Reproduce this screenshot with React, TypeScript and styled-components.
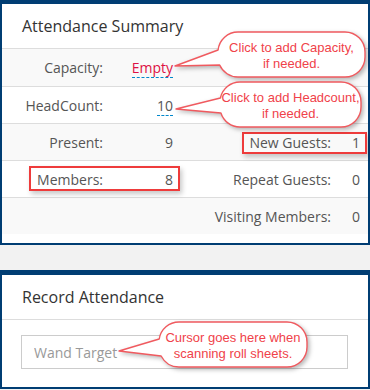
import React from "react";
import styled, { createGlobalStyle } from "styled-components";

const GlobalStyle = createGlobalStyle`
  html, body { margin: 0; padding: 0; }
  body {
    background: #f2f2f2;
    font-family: "Open Sans", "Liberation Sans", sans-serif;
    width: 370px;
    height: 390px;
    overflow: hidden;
  }
  * { box-sizing: border-box; }
`;

const Page = styled.main`
  display: flex;
  flex-direction: column;
  gap: 25px;
  margin-top: -1px;
`;

const Panel = styled.section<{ $padBottom: number }>`
  position: relative;
  background: #fff;
  border: 2px solid #003d73;
  border-top-width: 5px;
  padding-bottom: ${(p) => p.$padBottom}px;
`;

const PanelTitle = styled.h2`
  margin: 0;
  height: 45px;
  padding: 0 20px;
  display: flex;
  align-items: center;
  font-size: 16px;
  font-weight: 400;
  color: #333;
  border-bottom: 1px solid #ddd;
`;

const StatsRow = styled.div<{ $striped: boolean }>`
  display: grid;
  grid-template-columns: 109px 70px 158px 1fr;
  height: 37px;
  align-items: center;
  background: ${(p) => (p.$striped ? "#f9f9f9" : "#fff")};
  & + & {
    border-top: 1px solid #ddd;
  }
`;

const Cell = styled.div`
  text-align: right;
  padding-right: 8px;
  font-size: 14px;
  color: #555;
  white-space: nowrap;
`;

const Editable = styled.span<{ $empty?: boolean }>`
  color: ${(p) => (p.$empty ? "#dd1144" : "#555")};
  border-bottom: 1px dashed #0088cc;
`;

const PanelBody = styled.div`
  padding: 15px 20px 0 19px;
`;

const WandInput = styled.input`
  display: block;
  width: 100%;
  height: 34px;
  border: 1px solid #ccc;
  padding: 0 12px;
  font-family: "Open Sans", sans-serif;
  font-size: 14px;
  color: #555;
  background: #fff;
  outline: none;
  &::placeholder {
    color: #999;
  }
`;

const Highlight = styled.div<{ $x: number; $y: number; $w: number; $h: number }>`
  position: absolute;
  left: ${(p) => p.$x}px;
  top: ${(p) => p.$y}px;
  width: ${(p) => p.$w}px;
  height: ${(p) => p.$h}px;
  border: 2px solid #ee3b3b;
  box-shadow: 2px 3px 5px rgba(0, 0, 0, 0.22);
  pointer-events: none;
`;

const CalloutWrap = styled.div<{ $x: number; $y: number; $w: number; $h: number }>`
  position: absolute;
  left: ${(p) => p.$x}px;
  top: ${(p) => p.$y}px;
  width: ${(p) => p.$w}px;
  height: ${(p) => p.$h}px;
  pointer-events: none;
`;

const CalloutShape = styled.svg`
  position: absolute;
  overflow: visible;
  filter: drop-shadow(2px 2px 2px rgba(0, 0, 0, 0.28));
`;

const CalloutText = styled.div`
  position: relative;
  height: 100%;
  display: flex;
  flex-direction: column;
  align-items: center;
  justify-content: center;
  padding-top: 3px;
  font-family: "Liberation Sans", Arial, sans-serif;
  font-size: 13px;
  line-height: 16px;
  color: #f0424a;
  text-align: center;
  white-space: nowrap;
`;

type CalloutProps = {
  x: number;
  y: number;
  w: number;
  h: number;
  tipX: number;
  tipY: number;
  y1: number;
  y2: number;
  lines: string[];
};

function Callout({ x, y, w, h, tipX, tipY, y1, y2, lines }: CalloutProps) {
  const r = 20;
  const x1 = y1 < r ? r - Math.sqrt(r * r - (r - y1) * (r - y1)) : 0;
  const x2 = y2 > h - r ? r - Math.sqrt(r * r - (y2 - (h - r)) * (y2 - (h - r))) : 0;
  const bottomLeft =
    y2 > h - r
      ? `A ${r} ${r} 0 0 1 ${x2.toFixed(2)} ${y2}`
      : `A ${r} ${r} 0 0 1 0 ${h - r} V ${y2}`;
  const topLeft =
    y1 < r
      ? `A ${r} ${r} 0 0 1 ${r} 0`
      : `V ${r} A ${r} ${r} 0 0 1 ${r} 0`;
  const d = [
    `M ${r} 0`,
    `H ${w - r}`,
    `A ${r} ${r} 0 0 1 ${w} ${r}`,
    `V ${h - r}`,
    `A ${r} ${r} 0 0 1 ${w - r} ${h}`,
    `H ${r}`,
    bottomLeft,
    `L ${tipX} ${tipY}`,
    `L ${x1.toFixed(2)} ${y1}`,
    topLeft,
    "Z",
  ].join(" ");
  const left = tipX - 4;
  const vw = w - left + 4;
  const vh = h + 8;
  return (
    <CalloutWrap $x={x} $y={y} $w={w} $h={h}>
      <CalloutShape
        width={vw}
        height={vh}
        viewBox={`${left} -4 ${vw} ${vh}`}
        style={{ left: left, top: -4 }}
      >
        <path d={d} fill="#fff" stroke="#f05a5f" strokeWidth={1.4} strokeLinejoin="round" />
      </CalloutShape>
      <CalloutText>
        {lines.map((l) => (
          <span key={l}>{l}</span>
        ))}
      </CalloutText>
    </CalloutWrap>
  );
}

type Stat = { label: string; value: React.ReactNode };

const rows: [Stat | null, Stat | null][] = [
  [{ label: "Capacity:", value: <Editable $empty>Empty</Editable> }, null],
  [{ label: "HeadCount:", value: <Editable>10</Editable> }, null],
  [{ label: "Present:", value: "9" }, { label: "New Guests:", value: "1" }],
  [{ label: "Members:", value: "8" }, { label: "Repeat Guests:", value: "0" }],
  [null, { label: "Visiting Members:", value: "0" }],
];

export default function App() {
  return (
    <>
      <GlobalStyle />
      <Page>
        <Panel $padBottom={9}>
          <PanelTitle>Attendance Summary</PanelTitle>
          {rows.map(([a, b], i) => (
            <StatsRow key={i} $striped={i % 2 === 0}>
              <Cell>{a?.label}</Cell>
              <Cell>{a?.value}</Cell>
              <Cell>{b?.label}</Cell>
              <Cell>{b?.value}</Cell>
            </StatsRow>
          ))}
          <Highlight $x={27} $y={162} $w={151} $h={25} />
          <Highlight $x={240} $y={128} $w={125} $h={22} />
          <Callout
            x={216}
            y={28}
            w={147}
            h={45}
            tipX={-43}
            tipY={34}
            y1={18}
            y2={33}
            lines={["Click to add Capacity,", "if needed."]}
          />
          <Callout
            x={218}
            y={78}
            w={141}
            h={45}
            tipX={-44}
            tipY={27}
            y1={16}
            y2={31}
            lines={["Click to add Headcount,", "if needed."]}
          />
        </Panel>
        <Panel $padBottom={18}>
          <PanelTitle>Record Attendance</PanelTitle>
          <PanelBody>
            <WandInput placeholder="Wand Target" />
          </PanelBody>
          <Callout
            x={157}
            y={47}
            w={148}
            h={45}
            tipX={-40}
            tipY={29}
            y1={17}
            y2={34}
            lines={["Cursor goes here when", "scanning roll sheets."]}
          />
        </Panel>
      </Page>
    </>
  );
}
